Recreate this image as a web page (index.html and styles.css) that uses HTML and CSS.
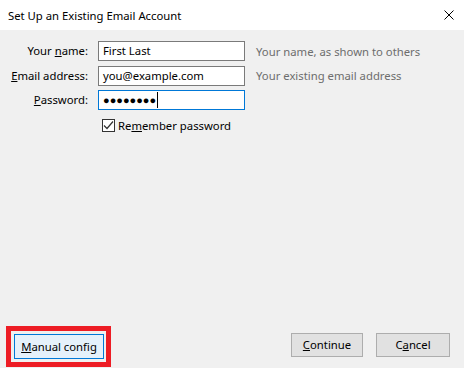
FILE: index.html
```html
<!DOCTYPE html>
<html>
<head>
<meta charset="utf-8">
<link rel="stylesheet" href="styles.css">
</head>
<body>
<div class="dialog">
  <div class="titlebar">
    <span class="title">Set Up an Existing Email Account</span>
    <svg class="close" width="10" height="10" viewBox="0 0 10 10"><path d="M0.5 0.5L9.5 9.5M9.5 0.5L0.5 9.5" stroke="#000" stroke-width="1" fill="none"/></svg>
  </div>
  <div class="content">
    <div class="form">
      <label class="lbl">Your <u>n</u>ame:</label>
      <div class="field">First Last</div>
      <span class="hint">Your name, as shown to others</span>

      <label class="lbl"><u>E</u>mail address:</label>
      <div class="field">you@example.com</div>
      <span class="hint">Your existing email address</span>

      <label class="lbl"><u>P</u>assword:</label>
      <div class="field focused"><span class="dots">●●●●●●●●</span><span class="caret"></span></div>
      <span></span>

      <span></span>
      <div class="check-row">
        <span class="checkbox"><svg width="11" height="11" viewBox="0 0 11 11"><path d="M1 5.5L4 8.5L10 1.5" stroke="#333" stroke-width="1.2" fill="none"/></svg></span>
        <span>Re<u>m</u>ember password</span>
      </div>
      <span></span>
    </div>
    <div class="footer">
      <div class="highlight"><button class="btn primary"><u>M</u>anual config</button></div>
      <div class="right">
        <button class="btn cont"><u>C</u>ontinue</button>
        <button class="btn cancel">C<u>a</u>ncel</button>
      </div>
    </div>
  </div>
</div>
</body>
</html>
```
FILE: styles.css
```css
html, body {
  margin: 0;
  padding: 0;
}
body {
  width: 464px;
  height: 368px;
  overflow: hidden;
  font-family: "Noto Sans", "Open Sans", sans-serif;
  font-size: 11.3px;
  color: #000;
}
.dialog {
  display: flex;
  flex-direction: column;
  height: 368px;
}
.titlebar {
  height: 30px;
  background: #fff;
  display: flex;
  align-items: center;
  justify-content: space-between;
  padding: 0 10px 0 8px;
  box-sizing: border-box;
}
.title {
  line-height: 30px;
  margin-top: 1px;
}
.close {
  display: block;
}
.content {
  flex: 1;
  background: #f0f0f0;
  display: flex;
  flex-direction: column;
  justify-content: space-between;
}
.form {
  display: grid;
  grid-template-columns: 88px 147px auto;
  grid-auto-rows: 20px;
  row-gap: 4.5px;
  column-gap: 10px;
  padding: 11px 0 0 0;
  align-items: center;
}
.lbl {
  text-align: right;
  line-height: 20px;
  white-space: nowrap;
}
.field {
  height: 20px;
  box-sizing: border-box;
  border: 1px solid #7a7a7a;
  background: #fff;
  padding: 0 4px;
  line-height: 18px;
  display: flex;
  align-items: center;
  white-space: nowrap;
}
.field.focused {
  border-color: #0078d7;
}
.dots {
  font-family: "Liberation Sans", sans-serif;
  font-size: 11px;
  line-height: 18px;
}
.caret {
  width: 1px;
  height: 16px;
  background: #000;
  margin-left: 1px;
}
.hint {
  color: #6d6d6d;
  margin-left: 1px;
  white-space: nowrap;
}
.check-row {
  display: flex;
  align-items: center;
  gap: 3px;
  padding-left: 4px;
  margin-top: 1px;
}
.checkbox {
  width: 13px;
  height: 13px;
  box-sizing: border-box;
  border: 1px solid #333;
  background: #fff;
  display: flex;
  align-items: center;
  justify-content: center;
}
.checkbox svg {
  display: block;
}
.footer {
  display: flex;
  justify-content: space-between;
  align-items: flex-end;
  padding: 0 14px 1px 6px;
}
.highlight {
  border: 5px solid #ed1c24;
  padding: 3px 2px 3px 3px;
  background: #f0f0f0;
}
.btn {
  font-family: inherit;
  font-size: 11.3px;
  color: #000;
  height: 24px;
  box-sizing: border-box;
  border: 1px solid #adadad;
  background: #e1e1e1;
  padding: 0;
  margin: 0;
  display: block;
  line-height: 20px;
}
.primary {
  width: 90px;
  height: 25px;
  border-color: #0078d7;
  background: #e5f1fb;
}
.right {
  display: flex;
  gap: 13px;
  margin-bottom: 10px;
}
.cont {
  width: 72px;
}
.cancel {
  width: 74px;
}
```
